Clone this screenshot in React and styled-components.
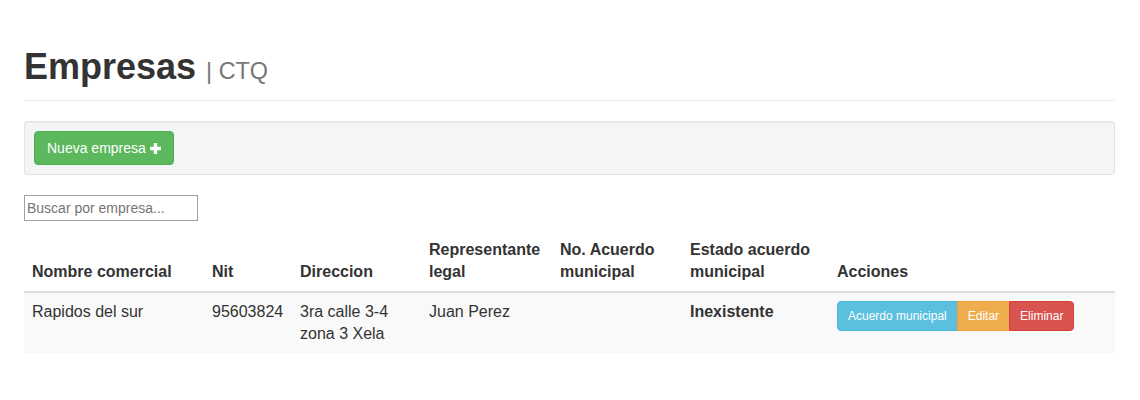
import React, { useState } from "react";
import styled, { createGlobalStyle } from "styled-components";

const GlobalStyle = createGlobalStyle`
  body {
    margin: 0;
    background: #fff;
    color: #333;
    font-family: "Liberation Sans", Arial, sans-serif;
    font-size: 14px;
    line-height: 1.42857;
  }
  * { box-sizing: border-box; }
`;

const Container = styled.div`
  padding: 0 25px 0 24px;
`;

const PageHeader = styled.div`
  margin-top: 47px;
  border-bottom: 1px solid #eee;
`;

const Title = styled.h1`
  margin: 0 0 13px;
  font-size: 36px;
  line-height: 40px;
  font-weight: bold;
  color: #333;
`;

const Small = styled.small`
  font-size: 65%;
  line-height: 1;
  font-weight: normal;
  color: #777;
`;

const Well = styled.div`
  margin-top: 20px;
  margin-bottom: 20px;
  padding: 9px;
  background: #f5f5f5;
  border: 1px solid #e3e3e3;
  border-radius: 3px;
  box-shadow: inset 0 1px 1px rgba(0, 0, 0, 0.05);
`;

const variants = {
  success: { bg: "#5cb85c", border: "#4cae4c" },
  info: { bg: "#5bc0de", border: "#46b8da" },
  warning: { bg: "#f0ad4e", border: "#eea236" },
  danger: { bg: "#d9534f", border: "#d43f3a" },
};

const Button = styled.button`
  display: inline-flex;
  align-items: center;
  gap: 4px;
  padding: ${(p) => (p.$small ? "5px 10px" : "6px 12px")};
  font-family: inherit;
  font-size: ${(p) => (p.$small ? "12px" : "14px")};
  line-height: ${(p) => (p.$small ? "18px" : "20px")};
  color: #fff;
  background: ${(p) => variants[p.$variant].bg};
  border: 1px solid ${(p) => variants[p.$variant].border};
  border-radius: 4px;
  cursor: pointer;
  white-space: nowrap;
`;

const BtnGroup = styled.div`
  display: flex;

  & > ${Button} {
    border-radius: 0;
  }
  & > ${Button} + ${Button} {
    margin-left: -1px;
  }
  & > ${Button}:first-child {
    border-radius: 4px 0 0 4px;
  }
  & > ${Button}:last-child {
    border-radius: 0 4px 4px 0;
  }
`;

const Search = styled.input`
  display: block;
  width: 174px;
  height: 26px;
  padding: 1px 2px;
  font-family: inherit;
  font-size: 14px;
  color: #333;
  border: 1px solid #a0a0a0;
  outline: none;

  &::placeholder {
    color: #757575;
  }
`;

const Table = styled.table`
  width: 100%;
  margin-top: 10px;
  margin-bottom: 20px;
  border-collapse: collapse;
  border-spacing: 0;
  table-layout: fixed;
  font-size: 16px;
  line-height: 22px;
`;

const Th = styled.th`
  padding: 8px;
  text-align: left;
  vertical-align: bottom;
  font-weight: bold;
  border-bottom: 2px solid #ddd;
`;

const Tr = styled.tr`
  background: ${(p) => (p.$striped ? "#f9f9f9" : "transparent")};
`;

const Td = styled.td`
  padding: 8px;
  vertical-align: top;
  font-weight: ${(p) => (p.$bold ? "bold" : "normal")};
`;

const Plus = () => (
  <svg width="11" height="11" viewBox="0 0 11 11" aria-hidden="true">
    <path d="M3.8 0h3.4v3.8H11v3.4H7.2V11H3.8V7.2H0V3.8h3.8z" fill="#fff" />
  </svg>
);

const columns = [
  { label: "Nombre comercial", width: 180 },
  { label: "Nit", width: 88 },
  { label: "Direccion", width: 129 },
  { label: "Representante legal", width: 131 },
  { label: "No. Acuerdo municipal", width: 130 },
  { label: "Estado acuerdo municipal", width: 147 },
  { label: "Acciones" },
];

const empresas = [
  {
    nombre: "Rapidos del sur",
    nit: "95603824",
    direccion: "3ra calle 3-4 zona 3 Xela",
    representante: "Juan Perez",
    acuerdo: "",
    estado: "Inexistente",
  },
];

const App = () => {
  const [query, setQuery] = useState("");

  const rows = empresas.filter((e) =>
    e.nombre.toLowerCase().includes(query.toLowerCase())
  );

  return (
    <Container>
      <GlobalStyle />
      <PageHeader>
        <Title>
          Empresas <Small>| CTQ</Small>
        </Title>
      </PageHeader>

      <Well>
        <Button $variant="success">
          Nueva empresa <Plus />
        </Button>
      </Well>

      <Search
        placeholder="Buscar por empresa..."
        value={query}
        onChange={(e) => setQuery(e.target.value)}
      />

      <Table>
        <colgroup>
          {columns.map((c) => (
            <col key={c.label} style={c.width ? { width: c.width } : undefined} />
          ))}
        </colgroup>
        <thead>
          <tr>
            {columns.map((c) => (
              <Th key={c.label}>{c.label}</Th>
            ))}
          </tr>
        </thead>
        <tbody>
          {rows.map((e, i) => (
            <Tr key={e.nit} $striped={i % 2 === 0}>
              <Td>{e.nombre}</Td>
              <Td>{e.nit}</Td>
              <Td>{e.direccion}</Td>
              <Td>{e.representante}</Td>
              <Td>{e.acuerdo}</Td>
              <Td $bold>{e.estado}</Td>
              <Td>
                <BtnGroup>
                  <Button $small $variant="info">Acuerdo municipal</Button>
                  <Button $small $variant="warning">Editar</Button>
                  <Button $small $variant="danger">Eliminar</Button>
                </BtnGroup>
              </Td>
            </Tr>
          ))}
        </tbody>
      </Table>
    </Container>
  );
};

export default App;
